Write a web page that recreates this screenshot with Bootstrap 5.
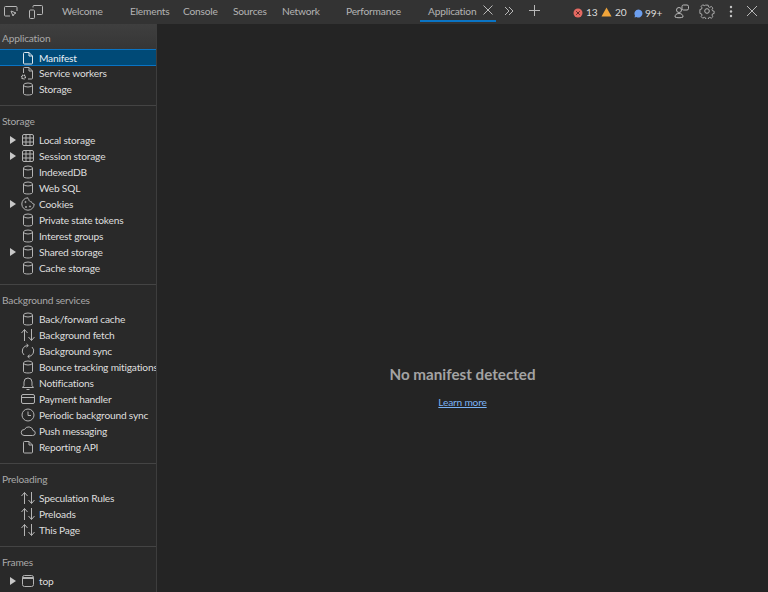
<!DOCTYPE html>
<html lang="en">
<head>
<meta charset="utf-8">
<title>Application</title>
<link href="https://cdn.jsdelivr.net/npm/bootstrap@5.3.0/dist/css/bootstrap.min.css" rel="stylesheet">
<style>
html,body{height:592px;overflow:hidden;background:#242424;font-family:Lato,"Noto Sans",sans-serif;font-size:10.2px;letter-spacing:-.2px;color:#d6d6d6}
.tbar{height:24px;background:#333;color:#b4b4b4;white-space:nowrap;position:relative}
.tab-item{position:absolute;top:5px;line-height:13px}
.tab-line{position:absolute;left:420px;top:20px;width:76px;height:2px;background:#0a74c4}
.ticon{position:absolute;fill:none;stroke:#b8b8b8;stroke-width:1}
.cnt{position:absolute;top:6px;line-height:13px;color:#dcdcdc}
.side{width:157px;height:568px;background:#292929;border-right:1px solid #3d3d3d;overflow:hidden;flex:none}
.sec-title{height:16px;line-height:16px;padding-left:2px;color:#a8a8a8;margin-bottom:3px;white-space:nowrap}
.first-head{height:25px;padding-top:6px;margin:0;background:linear-gradient(#3f3f3f,#363636)}
.rowx{height:16px;line-height:16px;display:flex;align-items:center;white-space:nowrap;color:#dedede}
.rowx.sel{height:17px;background:#004a77;border-top:1px solid #0a74c4;border-bottom:1px solid #0a74c4;color:#e6eef5;margin-bottom:-1px}
.arr{width:20px;flex:none;position:relative;height:16px}
.arr.has::after{content:"";position:absolute;left:10px;top:4px;border-left:6px solid #c8c8c8;border-top:4px solid transparent;border-bottom:4px solid transparent}
.ico{width:16px;height:16px;flex:none;fill:none;stroke:#b4b4b4;stroke-width:1;margin-right:3px}
.sel .ico{stroke:#e0e8ee}
.sep{border-top:1px solid #444;margin:8px 0 7px}
.main{flex:1;height:568px;position:relative}
.msg{position:absolute;left:0;right:0;top:340px;text-align:center}
.msg-h{font-size:15.2px;letter-spacing:0;font-weight:700;color:#a3a3a3;line-height:20px;margin:0}
.msg-l{display:block;margin-top:12px;color:#7ab2f5;line-height:13px;text-decoration:underline}
</style>
</head>
<body>
<svg width="0" height="0" class="d-block" style="position:absolute">
<defs>
<symbol id="i-doc" viewBox="0 0 16 16"><path d="M4.500 2.500h4.500l3.500 3.500v7a1 1 0 0 1-1 1h-7a1 1 0 0 1-1-1v-9.500a1 1 0 0 1 1-1zM9 2.500v3.500h3.500"/></symbol>
<symbol id="i-cyl" viewBox="0 0 16 16"><ellipse cx="8" cy="4" rx="4.500" ry="2"/><path d="M3.500 4v8.500c0 1 2 1.500 4.500 1.500s4.500-.5 4.500-1.500V4"/></symbol>
<symbol id="i-grid" viewBox="0 0 16 16"><rect x="2.500" y="2.500" width="11" height="11" rx="1.500"/><path d="M6 2.500v11M10 2.500v11M2.500 6h11M2.500 10h11"/></symbol>
<symbol id="i-updown" viewBox="0 0 16 16"><path d="M4.500 14V2.500M1.500 6l3-3.500 3 3.500M11.500 2v11.500M8.500 10l3 3.500 3-3.500"/></symbol>
</defs>
</svg>
<div class="tbar">
<svg class="ticon" style="left:3px;top:4px" width="16" height="16" viewBox="0 0 16 16"><path d="M7 12H2.500a1 1 0 0 1-1-1V3.500a1 1 0 0 1 1-1h10.500a1 1 0 0 1 1 1V7"/><path d="M8 7l5 2-2 1-1 2z"/></svg>
<svg class="ticon" style="left:28px;top:4px" width="16" height="16" viewBox="0 0 16 16"><rect x="1.500" y="6" width="5" height="8.500" rx="1"/><path d="M5 3.500V2.500a1 1 0 0 1 1-1h7.500a1 1 0 0 1 1 1v7a1 1 0 0 1-1 1H9"/></svg>
<span class="tab-item" style="left:62px">Welcome</span>
<span class="tab-item" style="left:130px">Elements</span>
<span class="tab-item" style="left:183px">Console</span>
<span class="tab-item" style="left:233px">Sources</span>
<span class="tab-item" style="left:282px">Network</span>
<span class="tab-item" style="left:346px">Performance</span>
<span class="tab-item" style="left:428px">Application</span>
<svg class="ticon" style="left:482px;top:4px" width="12" height="12" viewBox="0 0 12 12"><path d="M1.500 1.500l9 9M10.500 1.500l-9 9"/></svg>
<div class="tab-line"></div>
<svg class="ticon" style="left:503px;top:5px" width="12" height="12" viewBox="0 0 12 12"><path d="M2 2l4 4-4 4M6 2l4 4-4 4"/></svg>
<svg class="ticon" style="left:528px;top:4px" width="13" height="13" viewBox="0 0 13 13"><path d="M6.500 1v11M1 6.500h11"/></svg>
<svg style="position:absolute;left:573px;top:8px" width="10" height="10" viewBox="0 0 10 10"><circle cx="5" cy="5" r="4.500" fill="#e46962"/><path d="M3.200 3.200l3.600 3.600M6.800 3.200l-3.600 3.600" stroke="#5c2b28" stroke-width="1"/></svg>
<span class="cnt" style="left:586px">13</span>
<svg style="position:absolute;left:601px;top:7px" width="11" height="10" viewBox="0 0 11 10"><path d="M5.500 .5l5 9h-10z" fill="#f0a43a"/></svg>
<span class="cnt" style="left:615px">20</span>
<svg style="position:absolute;left:634px;top:9px" width="9" height="9" viewBox="0 0 9 9"><path d="M4.500 .5a4 4 0 1 1-2 7.500L.5 8.500 1 6.500a4 4 0 0 1 3.500-6z" fill="#6c9fef"/></svg>
<span class="cnt" style="left:645px;top:7px">99+</span>
<svg class="ticon" style="left:674px;top:4px" width="15" height="15" viewBox="0 0 15 15"><rect x="8" y="1" width="6.500" height="5" rx="1.500"/><circle cx="5" cy="6" r="2.500"/><path d="M1 13c0-2 1-3.500 4-3.500s4 1.500 4 3.500c-1.500 1-6.500 1-8 0z"/></svg>
<svg class="ticon" style="left:699px;top:3px" width="16" height="16" viewBox="0 0 16 16"><path d="M6.700 1.500h2.600l.4 1.900 1.400.6 1.700-1 1.800 1.800-1 1.700.6 1.400 1.800.4v2.600l-1.800.4-.6 1.400 1 1.700-1.800 1.800-1.700-1-1.400.6-.4 1.800H6.700l-.4-1.800-1.400-.6-1.700 1-1.800-1.800 1-1.700-.6-1.400-1.800-.4V6.400l1.800-.4.6-1.400-1-1.700 1.800-1.800 1.700 1 1.400-.6z" transform="translate(.9 .8) scale(.89)"/><circle cx="8" cy="8" r="2.300"/></svg>
<svg style="position:absolute;left:729px;top:5px" width="4" height="13" viewBox="0 0 4 13" fill="#c4c4c4"><circle cx="2" cy="2" r="1.200"/><circle cx="2" cy="6.500" r="1.200"/><circle cx="2" cy="11" r="1.200"/></svg>
<svg class="ticon" style="left:746px;top:5px" width="12" height="12" viewBox="0 0 12 12"><path d="M1 1l10 10M11 1L1 11"/></svg>
</div>
<div class="d-flex">
<nav class="side">
<div class="sec-title first-head">Application</div>
<div class="rowx sel"><span class="arr"></span><svg class="ico"><use href="#i-doc"/></svg>Manifest</div>
<div class="rowx"><span class="arr"></span><svg class="ico" viewBox="0 0 16 16"><path d="M4.500 2.500h4.500l3.500 3.500v7a1 1 0 0 1-1 1H8M3.500 8V3.500a1 1 0 0 1 1-1M9 2.500v3.500h3.500"/><circle cx="3.500" cy="12" r="1.800" stroke="#c8c8c8" stroke-width="1.500" stroke-dasharray="1 .6"/></svg>Service workers</div>
<div class="rowx"><span class="arr"></span><svg class="ico"><use href="#i-cyl"/></svg>Storage</div>
<div class="sep"></div>
<div class="sec-title">Storage</div>
<div class="rowx"><span class="arr has"></span><svg class="ico"><use href="#i-grid"/></svg>Local storage</div>
<div class="rowx"><span class="arr has"></span><svg class="ico"><use href="#i-grid"/></svg>Session storage</div>
<div class="rowx"><span class="arr"></span><svg class="ico"><use href="#i-cyl"/></svg>IndexedDB</div>
<div class="rowx"><span class="arr"></span><svg class="ico"><use href="#i-cyl"/></svg>Web SQL</div>
<div class="rowx"><span class="arr has"></span><svg class="ico" viewBox="0 0 16 16"><path d="M8 1.800a6.200 6.200 0 1 0 6.200 6.200c-1.500 0-2.500-1-2.700-2.200-1.500 0-2.800-1-2.800-2.500-.6-.3-.7-1-.7-1.500z"/><circle cx="5.500" cy="6" r=".6"/><circle cx="10" cy="10.500" r=".6"/><circle cx="6" cy="11" r=".6"/></svg>Cookies</div>
<div class="rowx"><span class="arr"></span><svg class="ico"><use href="#i-cyl"/></svg>Private state tokens</div>
<div class="rowx"><span class="arr"></span><svg class="ico"><use href="#i-cyl"/></svg>Interest groups</div>
<div class="rowx"><span class="arr has"></span><svg class="ico"><use href="#i-cyl"/></svg>Shared storage</div>
<div class="rowx"><span class="arr"></span><svg class="ico"><use href="#i-cyl"/></svg>Cache storage</div>
<div class="sep"></div>
<div class="sec-title">Background services</div>
<div class="rowx"><span class="arr"></span><svg class="ico"><use href="#i-cyl"/></svg>Back/forward cache</div>
<div class="rowx"><span class="arr"></span><svg class="ico"><use href="#i-updown"/></svg>Background fetch</div>
<div class="rowx"><span class="arr"></span><svg class="ico" viewBox="0 0 16 16"><path d="M8 2.500A5.500 5.500 0 0 0 4 12M6.500 1L8.300 2.500 6.500 4.200M8 13.500A5.500 5.500 0 0 0 12 4M9.500 11.800L7.700 13.500l1.800 1.500"/></svg>Background sync</div>
<div class="rowx"><span class="arr"></span><svg class="ico"><use href="#i-cyl"/></svg>Bounce tracking mitigations</div>
<div class="rowx"><span class="arr"></span><svg class="ico" viewBox="0 0 16 16"><path d="M2.500 12.500h11l-1.500-2V7a4 4 0 0 0-8 0v3.500zM6.500 14.500h3"/></svg>Notifications</div>
<div class="rowx"><span class="arr"></span><svg class="ico" viewBox="0 0 16 16"><rect x="1.500" y="3.500" width="13" height="9" rx="1.500"/><path d="M1.500 6.500h13"/></svg>Payment handler</div>
<div class="rowx"><span class="arr"></span><svg class="ico" viewBox="0 0 16 16"><circle cx="8" cy="8" r="6"/><path d="M8 4.500V8.500h3"/></svg>Periodic background sync</div>
<div class="rowx"><span class="arr"></span><svg class="ico" viewBox="0 0 16 16"><path d="M4 12.500h8.500a2.500 2.500 0 0 0 .5-5A4.500 4.500 0 0 0 4.500 6.500a3 3 0 0 0-.5 6z"/></svg>Push messaging</div>
<div class="rowx"><span class="arr"></span><svg class="ico"><use href="#i-doc"/></svg>Reporting API</div>
<div class="sep"></div>
<div class="sec-title">Preloading</div>
<div class="rowx"><span class="arr"></span><svg class="ico"><use href="#i-updown"/></svg>Speculation Rules</div>
<div class="rowx"><span class="arr"></span><svg class="ico"><use href="#i-updown"/></svg>Preloads</div>
<div class="rowx"><span class="arr"></span><svg class="ico"><use href="#i-updown"/></svg>This Page</div>
<div class="sep"></div>
<div class="sec-title">Frames</div>
<div class="rowx"><span class="arr has"></span><svg class="ico" viewBox="0 0 16 16"><rect x="2.500" y="2.500" width="11" height="11" rx="2"/><path d="M2.500 5h11" stroke-width="2"/></svg>top</div>
</nav>
<main class="main">
<div class="msg">
<p class="msg-h">No manifest detected</p>
<a class="msg-l" href="#">Learn more</a>
</div>
</main>
</div>
</body>
</html>
